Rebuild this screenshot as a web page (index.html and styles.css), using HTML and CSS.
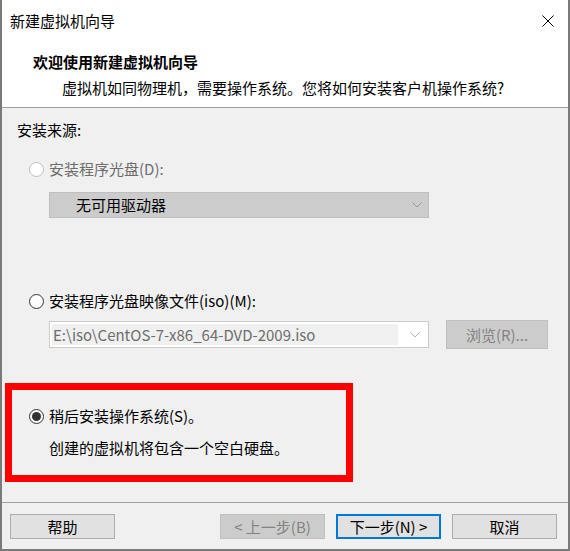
FILE: index.html
```html
<!doctype html>
<html>
<head>
  <meta charset="utf-8">
  <title>新建虚拟机向导</title>
  <link rel="stylesheet" href="styles.css">
</head>
<body>

<div class="wizard">
  <div class="titlebar">
    <span class="title">新建虚拟机向导</span>
    <svg class="close" width="12" height="12" viewBox="0 0 12 12">
      <path d="M0.5 0.5 L11.5 11.5 M11.5 0.5 L0.5 11.5" stroke="#000" stroke-width="1" fill="none"/>
    </svg>
  </div>

  <div class="header">
    <h1>欢迎使用新建虚拟机向导</h1>
    <p>虚拟机如同物理机，需要操作系统。您将如何安装客户机操作系统?</p>
  </div>

  <div class="content">
    <div class="label">安装来源:</div>

    <div class="option disabled opt-disc">
      <span class="radio"></span>
      <span>安装程序光盘(D):</span>
    </div>
    <div class="select select-disc">
      <span>无可用驱动器</span>
      <svg class="chev" width="10" height="6" viewBox="0 0 10 6"><path d="M0.5 0.5 L5 5 L9.5 0.5" stroke="#9a9a9a" fill="none"/></svg>
    </div>

    <div class="option opt-iso">
      <span class="radio"></span>
      <span>安装程序光盘映像文件(iso)(M):</span>
    </div>
    <div class="iso-row">
      <div class="select select-iso">
        <span class="field">E:\iso\CentOS-7-x86_64-DVD-2009.iso</span>
        <svg class="chev" width="10" height="6" viewBox="0 0 10 6"><path d="M0.5 0.5 L5 5 L9.5 0.5" stroke="#b5b5b5" fill="none"/></svg>
      </div>
      <button class="btn browse" disabled>浏览(R)...</button>
    </div>

    <div class="later">
      <div class="option">
        <span class="radio checked"></span>
        <span>稍后安装操作系统(S)。</span>
      </div>
      <div class="note">创建的虚拟机将包含一个空白硬盘。</div>
    </div>
  </div>

  <div class="footer">
    <button class="btn">帮助</button>
    <div class="spacer"></div>
    <button class="btn" disabled>&lt; 上一步(B)</button>
    <button class="btn default">下一步(N) &gt;</button>
    <button class="btn">取消</button>
  </div>
</div>

</body>
</html>
```

FILE: styles.css
```css
html, body {
  margin: 0;
  padding: 0;
}

body {
  font-family: "Noto Sans CJK SC", "Microsoft YaHei UI", sans-serif;
  font-size: 15px;
  line-height: 20px;
  color: #000;
  background-color: #f0f0f0;
}

.wizard {
  width: 570px;
  height: 551px;
  box-sizing: border-box;
  border: 2px solid #7a7a7a;
  border-top: none;
  background-color: #f0f0f0;
  display: flex;
  flex-direction: column;
}

.titlebar {
  height: 42px;
  background-color: #fff;
  display: flex;
  align-items: center;
  padding: 0 14px 0 8px;
}

.title {
  flex: 1;
}

.header {
  background-color: #fff;
  padding: 10px 0 9px 31px;
  border-bottom: 1px solid #a0a0a0;
}

.header h1 {
  margin: 0;
  font-size: 15px;
  font-weight: bold;
}

.header p {
  margin: 6px 0 0 29px;
}

.content {
  flex: 1;
  padding: 12px 0 0 15px;
}

.option {
  display: flex;
  align-items: center;
  gap: 5px;
  margin-left: 12px;
}

.opt-disc {
  margin-top: 19px;
}

.opt-iso {
  margin-top: 73px;
}

.disabled {
  color: #6d6d6d;
}

.radio {
  width: 15px;
  height: 15px;
  box-sizing: border-box;
  border: 1px solid #333;
  border-radius: 50%;
  background-color: #fff;
  display: flex;
  align-items: center;
  justify-content: center;
}

.disabled .radio {
  border-color: #bcbcbc;
}

.radio.checked::after {
  content: "";
  width: 9px;
  height: 9px;
  border-radius: 50%;
  background-color: #333;
}

.select {
  box-sizing: border-box;
  width: 380px;
  height: 26px;
  display: flex;
  align-items: center;
  border: 1px solid #bfbfbf;
}

.select span {
  flex: 1;
}

.select .chev {
  margin-right: 6px;
}

.select-disc {
  margin: 13px 0 0 32px;
  background-color: #ccc;
  padding-left: 26px;
}

.iso-row {
  display: flex;
  align-items: center;
  margin: 9px 0 0 32px;
}

.select-iso {
  height: 27px;
  border-color: #ccc;
  background-color: #fff;
  padding: 2px 0 2px 2px;
}

.select-iso .field {
  align-self: stretch;
  display: flex;
  align-items: center;
  background-color: #f0f0f0;
  color: #6d6d6d;
  padding-left: 1px;
  margin-right: 12px;
}

.select-iso .chev {
  margin-right: 8px;
}

.btn {
  font-family: inherit;
  font-size: 15px;
  line-height: 20px;
  color: #000;
  width: 105px;
  height: 25px;
  padding: 0;
  box-sizing: border-box;
  background-color: #e1e1e1;
  border: 1px solid #adadad;
}

.btn:disabled {
  background-color: #ccc;
  border-color: #bfbfbf;
  color: #838383;
}

.browse {
  width: 102px;
  height: 29px;
  margin-left: 17px;
}

.later {
  margin: 34px 0 0 -12px;
  width: 348px;
  box-sizing: border-box;
  border: 7px solid #f00;
  padding: 16px 0 17px 5px;
}

.note {
  margin: 12px 0 0 32px;
}

.footer {
  border-top: 1px solid #a0a0a0;
  padding: 11px 11px 10px 8px;
  display: flex;
  gap: 11px;
}

.spacer {
  flex: 1;
}

.btn.default {
  border: 2px solid #0078d7;
}
```
